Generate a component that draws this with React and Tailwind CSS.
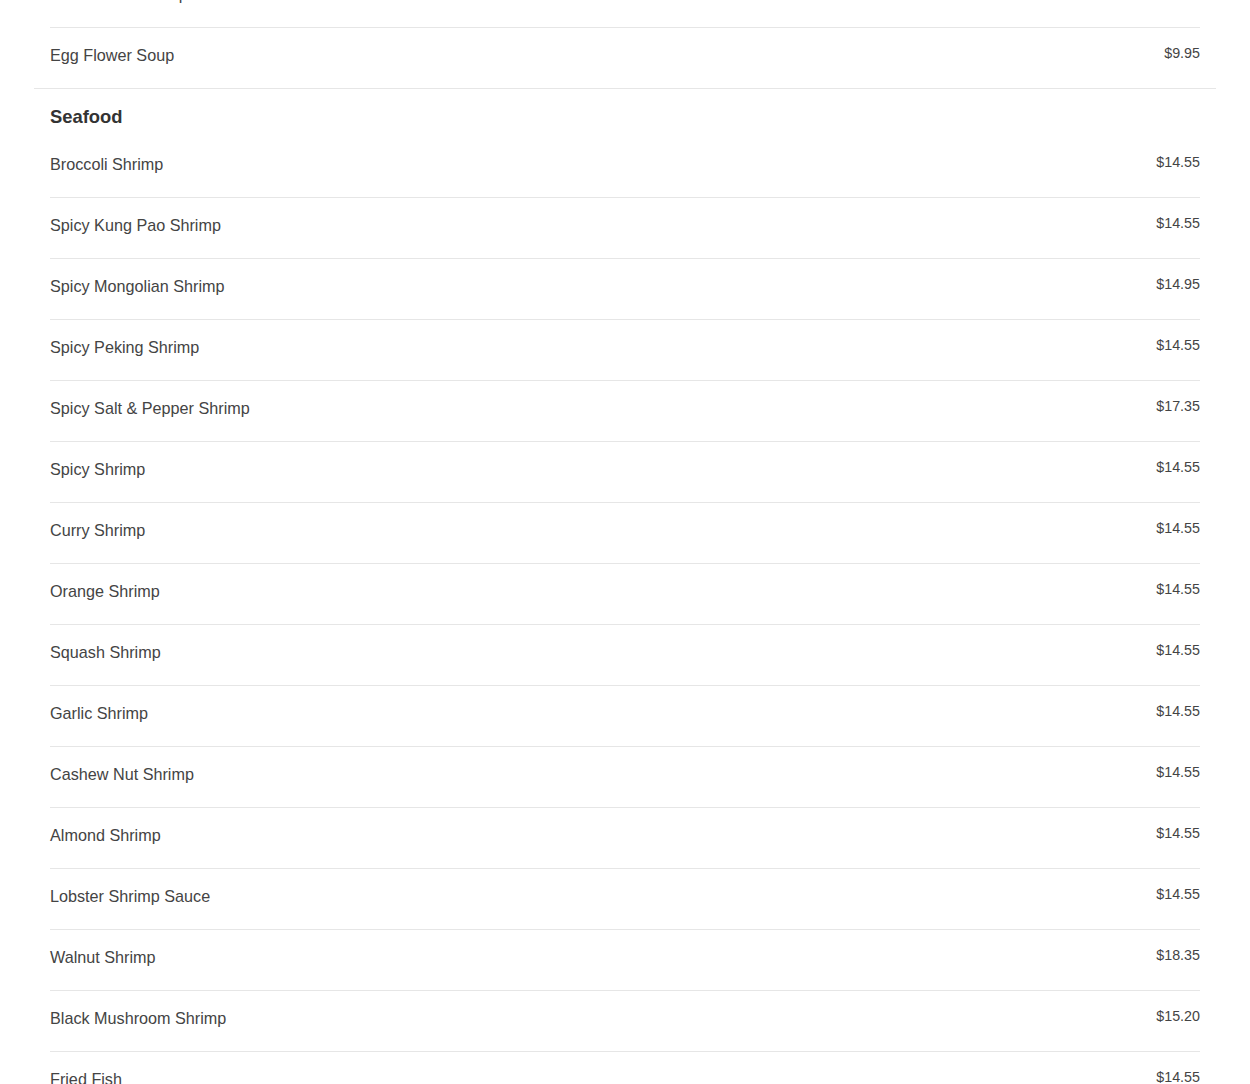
import React from "react";

const soups = [
  ["Hot and Sour Soup", "$9.95"],
  ["Egg Flower Soup", "$9.95"],
];

const seafood = [
  ["Broccoli Shrimp", "$14.55"],
  ["Spicy Kung Pao Shrimp", "$14.55"],
  ["Spicy Mongolian Shrimp", "$14.95"],
  ["Spicy Peking Shrimp", "$14.55"],
  ["Spicy Salt & Pepper Shrimp", "$17.35"],
  ["Spicy Shrimp", "$14.55"],
  ["Curry Shrimp", "$14.55"],
  ["Orange Shrimp", "$14.55"],
  ["Squash Shrimp", "$14.55"],
  ["Garlic Shrimp", "$14.55"],
  ["Cashew Nut Shrimp", "$14.55"],
  ["Almond Shrimp", "$14.55"],
  ["Lobster Shrimp Sauce", "$14.55"],
  ["Walnut Shrimp", "$18.35"],
  ["Black Mushroom Shrimp", "$15.20"],
  ["Fried Fish", "$14.55"],
  ["Fish with Broccoli", "$14.55"],
];

function Row({ name, price, last }) {
  return (
    <div
      className={
        "flex items-start justify-between pt-[15px] pb-[21px] " +
        (last ? "" : "border-b border-[#e6e6e6]")
      }
    >
      <span className="text-[16.2px] leading-6 text-[#444444]">{name}</span>
      <span className="text-[14.3px] leading-5 text-[#444444]">{price}</span>
    </div>
  );
}

function Section({ title, items }) {
  return (
    <div className="border-b border-[#e6e6e6]">
      <div className="px-4">
        {title && (
          <h3 className="pt-[17px] pb-[9px] text-[18.4px] leading-[22px] font-bold text-[#333333]">
            {title}
          </h3>
        )}
        {items.map(([n, p], i) => (
          <Row key={n} name={n} price={p} last={i === items.length - 1} />
        ))}
      </div>
    </div>
  );
}

export default function App() {
  return (
    <div
      className="h-[1084px] overflow-hidden bg-white"
      style={{ fontFamily: '"Liberation Sans", Arial, sans-serif' }}
    >
      <div className="mx-[34px] mt-[-33px]">
        <Section title={null} items={soups} />
        <Section title="Seafood" items={seafood} />
      </div>
    </div>
  );
}
